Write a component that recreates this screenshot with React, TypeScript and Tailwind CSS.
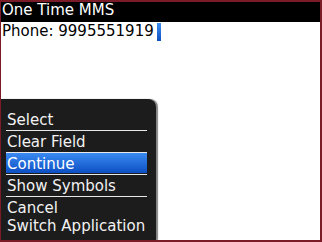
import React from "react";

const font = { fontFamily: '"DejaVu Sans", Verdana, sans-serif' };

const Sep = ({ mb = "mb-[2px]" }: { mb?: string }) => (
  <div className={`mt-[1px] ${mb} ml-[5px] mr-[9px] h-px bg-[#e8e8e8]`} />
);

const App = () => {
  return (
    <div
      className="relative w-[322px] h-[242px] overflow-hidden bg-white border-[#7b1b27] border-t-2 border-l border-r-2 border-b-2 text-[15px]"
      style={font}
    >
      {/* TITLE BAR */}
      <div className="h-[20px] bg-black text-white pl-[1px] leading-[16px]">One Time MMS</div>

      {/* FIELD */}
      <div className="flex items-start pl-[1px] text-black">
        <span className="leading-[17px] pt-[1px]">Phone: 9995551919</span>
        <span className="ml-[3px] mt-[1px] w-[4px] h-[18px] bg-gradient-to-b from-[#3f8ff2] to-[#0b4fc2]" />
      </div>

      {/* MENU */}
      <div className="absolute left-0 bottom-0 w-[155px] bg-[#1c1c1c] rounded-tr-[8px] shadow-[2px_0_1px_rgba(120,120,120,0.9)] text-[#f2f2f2] pt-[12px] pb-[5px]">
        <div className="pl-[6px] h-[18px] leading-[18px]">Select</div>
        <Sep />
        <div className="pl-[6px] h-[18px] leading-[18px]">Clear Field</div>
        <Sep mb="mb-0" />
        <div className="ml-[5px] mr-[9px] pl-[1px] pt-[2px] h-[20px] leading-[18px] text-white bg-gradient-to-b from-[#3a8af0] to-[#0c4fc4]">
          Continue
        </div>
        <Sep />
        <div className="pl-[6px] h-[18px] leading-[18px]">Show Symbols</div>
        <Sep />
        <div className="pl-[6px] h-[18px] leading-[18px]">Cancel</div>
        <div className="pl-[6px] h-[18px] leading-[18px]">Switch Application</div>
      </div>
    </div>
  );
};

export default App;
